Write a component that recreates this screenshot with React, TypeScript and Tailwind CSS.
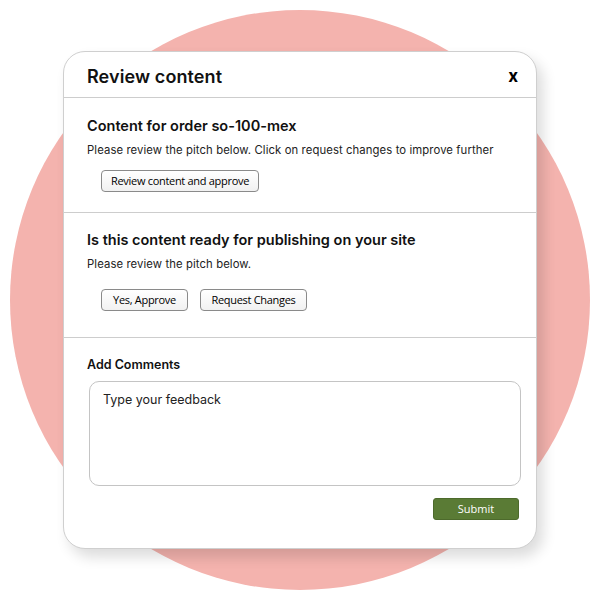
import React from 'react';

const font = { fontFamily: 'Inter, "Noto Sans", sans-serif' };

const OutlineButton = ({ label, className = '' }: { label: string; className?: string }) => (
  <button
    className={`h-[22px] rounded-[4px] border border-[#8a8a8a] bg-gradient-to-b from-white to-[#f1f1f1] text-[11px] text-black tracking-[-0.3px] ${className}`}
    style={{ fontFamily: '"Open Sans", sans-serif' }}
  >
    {label}
  </button>
);

const App = () => {
  return (
    <div className="w-[600px] h-[600px] bg-white flex items-center justify-center" style={font}>
      <div className="w-[580px] h-[580px] rounded-full bg-[#f4b3ae] flex items-center justify-center">
        <div className="w-[474px] h-[498px] bg-white rounded-[22px] border border-[#cfcfcf] shadow-[6px_8px_14px_rgba(0,0,0,0.14)] flex flex-col">
          <div className="h-[46px] flex items-center justify-between pt-[4px] pl-[23px] pr-[18px] border-b border-[#cdcdcd]">
            <h1 className="text-[18px] font-semibold text-[#111] tracking-[0.1px]">Review content</h1>
            <span className="text-[17px] font-bold text-black leading-none">x</span>
          </div>

          <div className="h-[115px] pl-[23px] pt-[18px] border-b border-[#cdcdcd]">
            <h2 className="text-[14.5px] font-semibold text-[#111] leading-[20px]">Content for order so-100-mex</h2>
            <p className="mt-[7px] text-[11.3px] text-[#222] leading-[14px] tracking-[0.1px]">
              Please review the pitch below. Click on request changes to improve further
            </p>
            <OutlineButton label="Review content and approve" className="mt-[13px] ml-[14px] w-[158px]" />
          </div>

          <div className="h-[125px] pl-[23px] pt-[17px] border-b border-[#cdcdcd]">
            <h2 className="text-[14.5px] font-semibold text-[#111] leading-[20px]">
              Is this content ready for publishing on your site
            </h2>
            <p className="mt-[7px] text-[11.3px] text-[#222] leading-[14px] tracking-[0.1px]">
              Please review the pitch below.
            </p>
            <div className="mt-[18px] ml-[14px] flex gap-[12px]">
              <OutlineButton label="Yes, Approve" className="w-[87px]" />
              <OutlineButton label="Request Changes" className="w-[107px]" />
            </div>
          </div>

          <div className="flex-1 pl-[23px] pr-[17px] pt-[18px]">
            <h3 className="text-[12.5px] font-semibold text-[#111] leading-[18px]">Add Comments</h3>
            <textarea
              placeholder="Type your feedback"
              className="mt-[7px] ml-[2px] block w-[432px] h-[105px] resize-none rounded-[10px] border border-[#c4c4c4] px-[13px] py-[9px] text-[12.5px] text-[#222] placeholder:text-[#222] outline-none"
              style={font}
            />
            <div className="flex justify-end mt-[12px]">
              <button
                className="w-[86px] h-[22px] rounded-[3px] bg-[#5a7b35] border border-[#4d6a2c] text-white text-[11px]"
                style={{ fontFamily: '"Open Sans", sans-serif' }}
              >
                Submit
              </button>
            </div>
          </div>
        </div>
      </div>
    </div>
  );
};

export default App;
